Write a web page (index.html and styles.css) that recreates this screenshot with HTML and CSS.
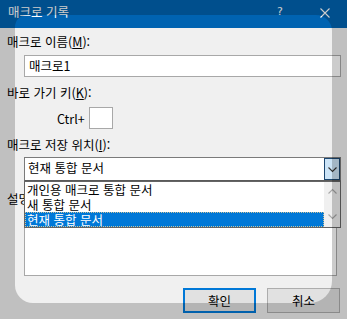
FILE: index.html
```html
<!DOCTYPE html>
<html lang="ko">
<head>
    <meta charset="UTF-8">
    <meta name="viewport" content="width=device-width, initial-scale=1.0">
    <title>매크로 기록</title>
    <link rel="stylesheet" href="styles.css">
</head>
<body>
    <div class="dialog">
        <div class="titlebar">
            <span class="title">매크로 기록</span>
            <span class="help">?</span>
            <svg class="close" width="10" height="10" viewBox="0 0 10 10">
                <path d="M0.5 0.5 L9.5 9.5 M9.5 0.5 L0.5 9.5" stroke="#fff" stroke-width="1.1" fill="none"/>
            </svg>
        </div>
        <div class="content">
            <div class="label">매크로 이름(<u>M</u>):</div>
            <div class="field">매크로1</div>

            <div class="label label-gap">바로 가기 키(<u>K</u>):</div>
            <div class="shortcut">
                <span>Ctrl+</span>
                <div class="keybox"></div>
            </div>

            <div class="label label-gap">매크로 저장 위치(<u>I</u>):</div>
            <div class="combo">
                <span class="combo-text">현재 통합 문서</span>
                <div class="combo-btn">
                    <svg width="9" height="6" viewBox="0 0 9 6">
                        <path d="M0.5 0.5 L4.5 4.5 L8.5 0.5" stroke="#333" stroke-width="1.1" fill="none"/>
                    </svg>
                </div>
                <!--열린 목록 -->
                <div class="droplist">
                    <div class="items">
                        <div class="item">개인용 매크로 통합 문서</div>
                        <div class="item">새 통합 문서</div>
                        <div class="item selected">현재 통합 문서</div>
                    </div>
                    <div class="scroll">
                        <svg width="9" height="6" viewBox="0 0 9 6">
                            <path d="M0.5 5.5 L4.5 1.5 L8.5 5.5" stroke="#a8a8a8" stroke-width="1.1" fill="none"/>
                        </svg>
                        <svg width="9" height="6" viewBox="0 0 9 6">
                            <path d="M0.5 0.5 L4.5 4.5 L8.5 0.5" stroke="#a8a8a8" stroke-width="1.1" fill="none"/>
                        </svg>
                    </div>
                </div>
            </div>

            <div class="label desc-label">설명(<u>D</u>):</div>
            <div class="memo"></div>

            <div class="buttons">
                <button class="btn btn-default">확인</button>
                <button class="btn">취소</button>
            </div>
        </div>
        <div class="spotlight"></div>
    </div>
</body>
</html>
```

FILE: styles.css
```css
body {
    margin: 0;
    padding: 0;
    overflow: hidden;
    font-family: "Noto Sans CJK KR", "Noto Sans", sans-serif;
    font-size: 12.5px;
    color: #000;
}
.dialog {
    position: relative;
    width: 347px;
    height: 319px;
    background: #f0f0f0;
    overflow: hidden;
}
.titlebar {
    height: 28px;
    background: #0063b1;
    color: #fff;
    display: flex;
    align-items: flex-start;
    padding-left: 8px;
}
.title {
    line-height: 24px;
    flex: 1;
}
.help {
    width: 10px;
    text-align: center;
    line-height: 24px;
    margin-right: 35px;
    font-family: "DejaVu Sans", sans-serif;
    font-size: 11px;
}
.close {
    flex: none;
    margin-top: 8px;
    margin-right: 17px;
}
.content {
    padding: 6px 7px 0 7px;
}
.label {
    line-height: 16px;
    height: 16px;
}
.label-gap {
    margin-top: 8px;
}
.field {
    margin: 5px 0 0 17px;
    width: 311px;
    height: 20px;
    line-height: 19px;
    padding-left: 4px;
    background: #fff;
    border: 1px solid #a8a8a8;
}
.shortcut {
    margin-top: 6px;
    padding-left: 50px;
    display: flex;
    align-items: center;
    gap: 4px;
}
.keybox {
    width: 22px;
    height: 20px;
    background: #fff;
    border: 1px solid #a8a8a8;
}
.combo {
    position: relative;
    margin: 4px 0 0 17px;
    width: 315px;
    height: 22px;
    background: #fff;
    border: 1px solid #7a7a7a;
    border-bottom-color: #5a5a5a;
    display: flex;
    align-items: center;
}
.combo-text {
    flex: 1;
    padding-left: 3px;
    line-height: 20px;
    padding-bottom: 2px;
}
.combo-btn {
    box-sizing: border-box;
    height: 22px;
    width: 16px;
    background: #cce4f7;
    border: 1px solid #1c4670;
    display: flex;
    align-items: center;
    justify-content: center;
    padding-top: 1px;
}
.droplist {
    position: absolute;
    left: -1px;
    top: 23px;
    width: 315px;
    height: 45px;
    background: #fff;
    border: 1px solid #646464;
    display: flex;
    z-index: 2;
}
.items {
    flex: 1;
}
.item {
    height: 15px;
    line-height: 15px;
    padding-left: 2px;
    white-space: nowrap;
}
.item.selected {
    background: #0078d7;
    color: #fff;
    outline: 1px dotted #c9c29a;
    outline-offset: -1px;
}
.scroll {
    width: 16px;
    background: #f0f0f0;
    display: flex;
    flex-direction: column;
    justify-content: space-between;
    align-items: center;
    padding: 6px 0 7px 0;
    box-sizing: border-box;
}
.desc-label {
    margin-top: 10px;
}
.memo {
    margin: 3px 0 0 17px;
    width: 311px;
    height: 64px;
    background: #fff;
    border: 1px solid #a8a8a8;
}
.buttons {
    margin-top: 12px;
    display: flex;
    justify-content: flex-end;
    gap: 11px;
}
.btn {
    width: 73px;
    height: 25px;
    padding: 0;
    font-family: "Noto Sans CJK KR", sans-serif;
    font-size: 12.5px;
    line-height: 20px;
    color: #000;
    background: #e1e1e1;
    border: 1px solid #adadad;
}
.btn-default {
    border: 2px solid #0078d7;
}
.spotlight {
    position: absolute;
    left: 15px;
    top: 15px;
    width: 317px;
    height: 288px;
    border-radius: 12px 16px 22px 18px;
    box-shadow: 0 0 0 500px rgba(0, 0, 0, 0.2);
    pointer-events: none;
    z-index: 5;
}
```
